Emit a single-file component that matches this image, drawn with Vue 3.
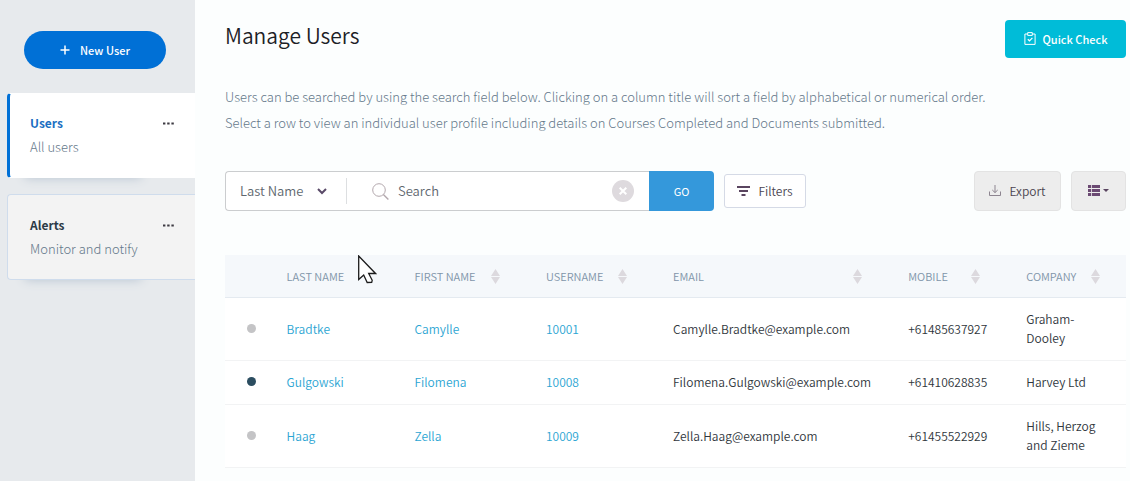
<script setup>
import { ref } from 'vue'

const field = ref('Last Name')
const fields = ['Last Name', 'First Name', 'Username', 'Email']
const query = ref('')

const groups = [
  { title: 'Users', note: 'All users', active: true },
  { title: 'Alerts', note: 'Monitor and notify', active: false }
]

const columns = [
  { label: 'Last Name', key: 'last', sortable: false },
  { label: 'First Name', key: 'first', sortable: true },
  { label: 'Username', key: 'username', sortable: true },
  { label: 'Email', key: 'email', sortable: true },
  { label: 'Mobile', key: 'mobile', sortable: true },
  { label: 'Company', key: 'company', sortable: true }
]

const users = [
  { last: 'Bradtke', first: 'Camylle', username: '10001', email: 'Camylle.Bradtke@example.com', mobile: '+61485637927', company: 'Graham-Dooley', online: false },
  { last: 'Gulgowski', first: 'Filomena', username: '10008', email: 'Filomena.Gulgowski@example.com', mobile: '+61410628835', company: 'Harvey Ltd', online: true },
  { last: 'Haag', first: 'Zella', username: '10009', email: 'Zella.Haag@example.com', mobile: '+61455522929', company: 'Hills, Herzog and Zieme', online: false }
]
</script>

<template>
  <div class="page">
    <aside class="sidebar">
      <button class="new-user" type="button">
        <svg width="10" height="10" viewBox="0 0 10 10" aria-hidden="true"><path d="M5 0.5v9M0.5 5h9" stroke="#fff" stroke-width="1.5" /></svg>
        New User
      </button>
      <nav class="groups">
        <div v-for="g in groups" :key="g.title" class="group" :class="{ active: g.active }">
          <div class="group-body">
            <div class="group-head">
              <a href="#" class="group-title">{{ g.title }}</a>
              <button class="more" type="button" :aria-label="g.title + ' options'">
                <svg width="11" height="3" viewBox="0 0 11 3" aria-hidden="true"><path d="M0 .5h2.4v2H0zM4.2 .5h2.4v2H4.2zM8.4 .5h2.4v2H8.4z" fill="#3d3a42" /></svg>
              </button>
            </div>
            <div class="group-note">{{ g.note }}</div>
          </div>
        </div>
      </nav>
    </aside>

    <main class="main">
      <header class="top">
        <h1>Manage Users</h1>
        <button class="quick" type="button">
          <svg width="12" height="13" viewBox="0 0 12 13" fill="none" stroke="#fff" aria-hidden="true">
            <path d="M3.5 2H.9v10.4h10.2V2H8.5" /><path d="M3.7 .6h4.6v2.8H3.7z" /><path d="M3.8 7.2l1.7 1.6 2.9-3" stroke-width="1.2" />
          </svg>
          Quick Check
        </button>
      </header>

      <p class="intro">
        Users can be searched by using the search field below. Clicking on a column title will sort a field by alphabetical or numerical order.<br />
        Select a row to view an individual user profile including details on Courses Completed and Documents submitted.
      </p>

      <div class="toolbar">
        <form class="search" @submit.prevent>
          <div class="search-box">
            <div class="picker">
              <select v-model="field" aria-label="Search field">
                <option v-for="f in fields" :key="f">{{ f }}</option>
              </select>
              <svg class="chevron" width="10" height="7" viewBox="0 0 10 7" aria-hidden="true"><path d="M1 1l4 4 4-4" fill="none" stroke="#5a4a68" stroke-width="2" /></svg>
            </div>
            <svg class="lens" width="17" height="17" viewBox="0 0 17 17" fill="none" stroke="#b3a8ad" aria-hidden="true">
              <circle cx="7" cy="7" r="6.3" /><path d="M11.4 11.4l5 5" stroke-width="1.4" />
            </svg>
            <input v-model="query" type="text" placeholder="Search" aria-label="Search" />
            <button class="clear" type="button" aria-label="Clear search" @click="query = ''">
              <svg width="8" height="8" viewBox="0 0 8 8" aria-hidden="true"><path d="M.7 .7l6.6 6.6M7.3 .7L.7 7.3" stroke="#fff" stroke-width="2" /></svg>
            </button>
          </div>
          <button class="go" type="submit">GO</button>
        </form>
        <button class="filters" type="button">
          <svg width="13" height="10" viewBox="0 0 13 10" aria-hidden="true"><path d="M0 1h13M2 5h9M4.5 9h4" stroke="#5a4560" stroke-width="2" /></svg>
          Filters
        </button>
        <div class="tools">
          <button class="grey export" type="button">
            <svg width="12" height="11" viewBox="0 0 12 11" fill="none" stroke="#8d8590" aria-hidden="true"><path d="M.5 6.5v4h11v-4" /><path d="M6 0v7.4M3.3 5L6 7.6 8.7 5" /></svg>
            Export
          </button>
          <button class="grey view" type="button" aria-label="Choose columns">
            <svg width="12" height="11" viewBox="0 0 12 11" fill="#6b4a73" aria-hidden="true"><path d="M0 0h3.2v3H0zM4 0h8v3H4zM0 4h3.2v3H0zM4 4h8v3H4zM0 8h3.2v3H0zM4 8h8v3H4z" /></svg>
            <svg width="6" height="3" viewBox="0 0 6 3" fill="#5a4560" aria-hidden="true"><path d="M0 0h6L3 3z" /></svg>
          </button>
        </div>
      </div>

      <div class="table-wrap">
        <table>
          <colgroup>
            <col class="c-dot" /><col class="c-last" /><col class="c-first" /><col class="c-user" /><col class="c-email" /><col class="c-mobile" /><col class="c-company" />
          </colgroup>
          <thead>
            <tr>
              <th aria-label="Status"></th>
              <th v-for="c in columns" :key="c.key" scope="col">
                <div class="head">
                  <span>{{ c.label }}</span>
                  <svg v-if="c.sortable" width="9" height="15" viewBox="0 0 9 15" fill="#dcd9de" aria-hidden="true"><path d="M4.5 0L9 7H0zM0 8h9l-4.5 7z" /></svg>
                </div>
              </th>
            </tr>
          </thead>
          <tbody>
            <tr v-for="u in users" :key="u.username">
              <td class="status"><span class="dot" :class="{ online: u.online }"></span></td>
              <td><a href="#">{{ u.last }}</a></td>
              <td><a href="#">{{ u.first }}</a></td>
              <td><a href="#">{{ u.username }}</a></td>
              <td>{{ u.email }}</td>
              <td>{{ u.mobile }}</td>
              <td>{{ u.company }}</td>
            </tr>
          </tbody>
        </table>
        <svg class="pointer" width="19" height="29" viewBox="0 0 19 29" aria-hidden="true">
          <path d="M.7 1v23.5l5-4.5 3.5 7.5 4.5-.2.5-2-3.5-6.8h6.8z" fill="#fff" stroke="#1c1c1c" stroke-width="1.3" />
        </svg>
      </div>
    </main>
  </div>
</template>

<style>
body {
  background: #fcfefe;
}
</style>

<style scoped>
.page {
  display: flex;
  min-height: 100vh;
  font-family: "Noto Sans CJK SC", "Noto Sans", sans-serif;
  font-size: 12px;
  font-weight: 350;
  color: #30363c;
}
.page * {
  box-sizing: border-box;
}
button,
input,
select {
  font: inherit;
  margin: 0;
}
button {
  display: flex;
  align-items: center;
  justify-content: center;
  padding: 0;
  border: 0;
  cursor: pointer;
}
a {
  text-decoration: none;
}
svg {
  flex: none;
}

.sidebar {
  flex: none;
  width: 195px;
  background: #e7eaed;
  padding-top: 31px;
}
.new-user {
  width: 142px;
  height: 38px;
  margin-left: 24px;
  padding-bottom: 1px;
  gap: 10px;
  border-radius: 19px;
  background: #0070d6;
  color: #fff;
  font-size: 11px;
  font-weight: 500;
}
.groups {
  display: flex;
  flex-direction: column;
  gap: 16px;
  padding: 24px 0 0 7px;
}
.group {
  position: relative;
  z-index: 0;
}
.group::before {
  content: "";
  position: absolute;
  z-index: -1;
  inset: 50% 54px 6px 18px;
  box-shadow: 0 6px 10px 0 #b9c5d2;
}
.group-body {
  padding: 18px 21px 18px 22px;
  border: 1px solid #cfdcec;
  border-right: 0;
  border-radius: 4px 0 0 4px;
  background: #f3f3f3;
}
.active .group-body {
  padding-top: 17px;
  padding-left: 20px;
  border-color: #fff;
  border-left: 3px solid #0070d6;
  background: #fff;
}
.group-head {
  display: flex;
  justify-content: space-between;
  align-items: center;
}
.group-title {
  font-size: 12px;
  font-weight: 700;
  line-height: 24px;
  color: #2c3a47;
}
.active .group-title {
  color: #1b6fc2;
}
.more {
  height: 16px;
  background: none;
}
.group-note {
  font-size: 13px;
  font-weight: 300;
  line-height: 24px;
  color: #64788a;
}

.main {
  flex: 1;
  min-width: 0;
  padding: 20px 4px 0 30px;
}
.top {
  display: flex;
  justify-content: space-between;
  align-items: flex-start;
}
h1 {
  margin: 0;
  font-size: 21px;
  font-weight: 350;
  line-height: 30px;
  color: #1c2126;
}
.quick {
  width: 121px;
  height: 38px;
  padding-bottom: 1px;
  gap: 7px;
  border-radius: 4px;
  background: #00bcd8;
  color: #fff;
  font-size: 11px;
  font-weight: 500;
}
.intro {
  margin: 26px 0 35px;
  font-size: 13px;
  font-weight: 300;
  line-height: 26px;
  color: #64788a;
}

.toolbar {
  display: flex;
  align-items: center;
  gap: 10px;
}
.search {
  display: flex;
  flex: 0 1 489px;
  height: 40px;
}
.search-box {
  display: flex;
  flex: 1;
  min-width: 0;
  align-items: center;
  padding-right: 15px;
  border: 1px solid #cbcdcf;
  border-right: 0;
  border-radius: 4px 0 0 4px;
  background: #fff;
}
.picker {
  display: flex;
  align-items: center;
  width: 121px;
  height: 26px;
  border-right: 1px solid #dddfe1;
}
select {
  appearance: none;
  width: 100%;
  height: 26px;
  padding: 0 30px 1px 14px;
  border: 0;
  background: none;
  color: #60676e;
  font-size: 13px;
}
.chevron {
  margin: 0 19px 0 -29px;
  pointer-events: none;
}
.lens {
  margin-left: 25px;
}
input {
  flex: 1;
  min-width: 0;
  height: 26px;
  padding: 0 9px 1px;
  border: 0;
  background: none;
  color: #60676e;
  font-size: 13px;
}
input::placeholder {
  color: #60676e;
  opacity: 1;
}
.clear {
  width: 22px;
  height: 22px;
  border-radius: 50%;
  background: #dedade;
}
.go {
  width: 65px;
  border-radius: 0 4px 4px 0;
  background: #3498db;
  color: #fff;
  font-size: 11px;
  font-weight: 400;
}
.filters {
  width: 82px;
  height: 34px;
  padding-bottom: 1px;
  gap: 8px;
  border: 1px solid #d5dae6;
  border-radius: 3px;
  background: #fff;
  color: #4b4550;
}
.tools {
  display: flex;
  gap: 10px;
  margin-left: auto;
}
.grey {
  height: 40px;
  padding-bottom: 2px;
  border: 1px solid #e3e3e3;
  border-radius: 4px;
  background: #ededed;
  color: #4b4550;
}
.export {
  width: 87px;
  gap: 8px;
}
.view {
  width: 55px;
  gap: 3px;
}

.table-wrap {
  position: relative;
  margin-top: 44px;
}
table {
  width: 100%;
  table-layout: fixed;
  border-spacing: 0;
  background: #fff;
}
.c-dot { width: 5.5%; }
.c-last { width: 14.2%; }
.c-first { width: 14.6%; }
.c-user { width: 14.1%; }
.c-email { width: 26.1%; }
.c-mobile { width: 13.1%; }
.c-company { width: 12.4%; }
th {
  height: 43px;
  padding: 0 34px 0 12px;
  border-bottom: 1px solid #e4eaf0;
  background: #f5f8fb;
  color: #7f95a9;
  font-size: 11px;
  font-weight: 350;
  text-align: left;
  text-transform: uppercase;
  white-space: nowrap;
}
.head {
  display: flex;
  align-items: center;
  justify-content: space-between;
}
td {
  padding: 11px 12px 13px;
  border-bottom: 1px solid #f2f3f4;
  line-height: 19px;
  vertical-align: middle;
}
th:last-child,
td:last-child {
  padding-right: 26px;
}
td a {
  color: #2ba5d3;
}
.status {
  padding: 11px 0 13px 22px;
}
.dot {
  display: block;
  width: 9px;
  height: 9px;
  border-radius: 50%;
  background: #c4c4c6;
}
.dot.online {
  background: #2b4d60;
}
.pointer {
  position: absolute;
  left: 133px;
  top: 0;
}
</style>
